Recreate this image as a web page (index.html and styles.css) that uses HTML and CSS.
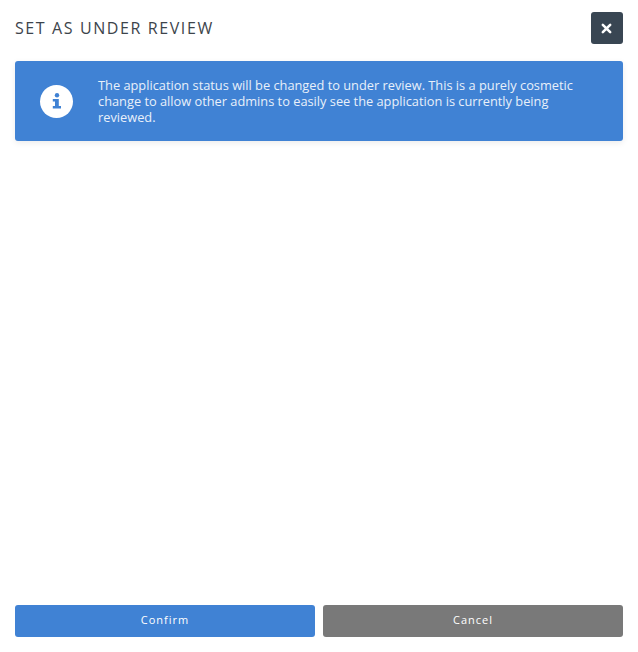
FILE: index.html
```html
<!DOCTYPE html>
<html>

<head>
    <title>Set as under review</title>
    <meta charset="UTF-8">
    <link rel="stylesheet" href="styles.css">
</head>

<body>
    <div class="modal">
        <div class="modal-header">
            <h2>Set as under review</h2>
            <button class="close-btn" type="button" aria-label="Close">
                <svg width="11" height="11" viewBox="0 0 12 12">
                    <path d="M2 2 L10 10 M10 2 L2 10" stroke="#fff" stroke-width="2.8" stroke-linecap="round" />
                </svg>
            </button>
        </div>

        <div class="alert">
            <div class="alert-icon">
                <svg width="12" height="18" viewBox="0 0 12 18">
                    <circle cx="6" cy="3.2" r="2.2" fill="#4082d4" />
                    <path d="M1.8 7 H7.8 V14 H10 V16.5 H1.8 V14 H4 V9.5 H1.8 Z" fill="#4082d4" />
                </svg>
            </div>
            <p>The application status will be changed to under review. This is a purely cosmetic change to allow other admins to easily see the application is currently being reviewed.</p>
        </div>

        <div class="modal-footer">
            <button class="btn btn-confirm" type="button">Confirm</button>
            <button class="btn btn-cancel" type="button">Cancel</button>
        </div>
    </div>
</body>

</html>
```

FILE: styles.css
```css
html, body {
    margin: 0;
    height: 100%;
    background-color: #fff;
}

body {
    font-family: "Open Sans", "Liberation Sans", sans-serif;
}

.modal {
    height: 652px;
    box-sizing: border-box;
    padding: 12px 15px 15px;
    display: flex;
    flex-direction: column;
}

.modal-header {
    display: flex;
    justify-content: space-between;
    align-items: center;
    margin-bottom: 17px;
}

.modal-header h2 {
    margin: 0;
    font-size: 16px;
    font-weight: 400;
    letter-spacing: 1.6px;
    text-transform: uppercase;
    color: #3d444b;
}

.close-btn {
    width: 32px;
    height: 32px;
    padding: 0 2px 0 0;
    border: none;
    border-radius: 3px;
    background-color: #394653;
    display: flex;
    align-items: center;
    justify-content: center;
    cursor: pointer;
}

/* Info box */
.alert {
    height: 80px;
    box-sizing: border-box;
    padding: 0 25px;
    display: flex;
    align-items: center;
    gap: 25px;
    background-color: #4082d4;
    border-radius: 3px;
    box-shadow: 0 2px 6px rgba(0, 0, 0, 0.08);
}

.alert p {
    margin: 0;
    font-size: 12.8px;
    line-height: 16px;
    color: #e8f0fa;
}

.alert-icon {
    flex: none;
    width: 33px;
    height: 33px;
    border-radius: 50%;
    background-color: #fff;
    display: flex;
    align-items: center;
    justify-content: center;
}

/* Footer buttons */
.modal-footer {
    margin-top: auto;
    display: flex;
    gap: 8px;
}

.btn {
    flex: 1;
    height: 32px;
    padding: 0 0 3px;
    border: none;
    border-radius: 3px;
    font-family: inherit;
    font-size: 11px;
    letter-spacing: 1px;
    color: #fff;
    cursor: pointer;
}

.btn-confirm {
    background-color: #4082d4;
}

.btn-cancel {
    background-color: #797979;
}
```
